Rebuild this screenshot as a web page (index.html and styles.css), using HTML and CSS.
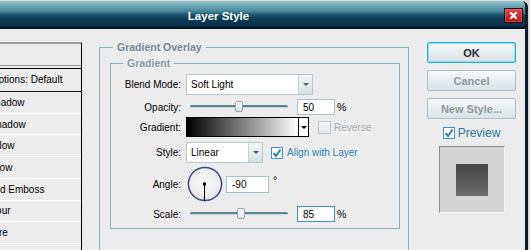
FILE: index.html
```html
<!DOCTYPE html>
<html>
<head>
<meta charset="utf-8">
<title>Layer Style</title>
<link rel="stylesheet" href="styles.css">
</head>
<body>
<div class="window">
  <div class="titlebar">
    <div class="title">Layer Style</div>
    <button class="close" aria-label="Close">
      <svg width="7" height="7" viewBox="0 0 7 7"><path d="M1 1L6 6M6 1L1 6" stroke="#fff" stroke-width="2.2" stroke-linecap="square"/></svg>
    </button>
  </div>
  <div class="content">
    <div class="styles-list">
      <div class="list-head">Styles</div>
      <div class="list-item blending">Blending Options: Default</div>
      <div class="list-item">Drop Shadow</div>
      <div class="list-item">Inner Shadow</div>
      <div class="list-item">Outer Glow</div>
      <div class="list-item">Inner Glow</div>
      <div class="list-item bevel">Bevel and Emboss</div>
      <div class="list-item sub">Contour</div>
      <div class="list-item sub">Texture</div>
      <div class="list-item">Satin</div>
    </div>

    <div class="panel">
      <div class="group outer">
        <div class="group-title">Gradient Overlay</div>
        <div class="group inner">
          <div class="group-title light">Gradient</div>

          <div class="row r-blend">
            <span class="lbl">Blend Mode:</span>
            <div class="select blend"><span class="sel-text">Soft Light</span><span class="sel-btn"></span></div>
          </div>

          <div class="row r-opacity">
            <span class="lbl">Opacity:</span>
            <div class="slider"><div class="track"></div><div class="thumb" style="left: calc(50% - 4px)"></div></div>
            <input class="num" type="text" value="50">
            <span class="unit">%</span>
          </div>

          <div class="row r-gradient">
            <span class="lbl">Gradient:</span>
            <div class="gradient"><span class="gradient-bar"></span><span class="gradient-btn"></span></div>
            <span class="check disabled"></span>
            <span class="check-label disabled">Reverse</span>
          </div>

          <div class="row r-style">
            <span class="lbl">Style:</span>
            <div class="select style"><span class="sel-text">Linear</span><span class="sel-btn"></span></div>
            <span class="check checked small">
              <svg width="10" height="10" viewBox="0 0 10 10"><path d="M1.5 5L4 8L8.5 1.5" fill="none" stroke="#2a86bb" stroke-width="2"/></svg>
            </span>
            <span class="check-label blue">Align with Layer</span>
          </div>

          <div class="row r-angle">
            <span class="lbl">Angle:</span>
            <svg class="dial" width="36" height="36" viewBox="0 0 36 36">
              <defs>
                <radialGradient id="dg" cx="50%" cy="45%" r="55%">
                  <stop offset="0" stop-color="#f7f7f7"/>
                  <stop offset="0.8" stop-color="#ececee"/>
                  <stop offset="1" stop-color="#d8dae4"/>
                </radialGradient>
              </defs>
              <circle cx="18" cy="18" r="16.6" fill="url(#dg)" stroke="#3f4a7c" stroke-width="1.5"/>
              <line x1="17.5" y1="18" x2="17.5" y2="35" stroke="#000" stroke-width="1"/>
              <rect x="16" y="16.5" width="3" height="3" fill="#000"/>
            </svg>
            <input class="num angle" type="text" value="-90">
            <span class="unit deg">°</span>
          </div>

          <div class="row r-scale">
            <span class="lbl">Scale:</span>
            <div class="slider"><div class="track"></div><div class="thumb" style="left: calc(52% - 4px)"></div></div>
            <input class="num focus" type="text" value="85">
            <span class="unit">%</span>
          </div>
        </div>
      </div>
    </div>

    <div class="buttons">
      <button class="btn ok">OK</button>
      <button class="btn">Cancel</button>
      <button class="btn">New Style...</button>
      <div class="preview-row">
        <span class="check checked">
          <svg width="10" height="10" viewBox="0 0 10 10"><path d="M1.5 5L4 8L8.5 1.5" fill="none" stroke="#2a86bb" stroke-width="2"/></svg>
        </span>
        <span class="preview-label">Preview</span>
      </div>
      <div class="preview-box"><div class="preview-swatch"></div></div>
    </div>
  </div>
</div>
</body>
</html>
```
FILE: styles.css
```css
* { box-sizing: border-box; }
html, body { margin: 0; padding: 0; }
body {
  width: 530px;
  height: 250px;
  overflow: hidden;
  background: #dadada;
  font-family: "Liberation Sans", Arial, sans-serif;
  font-size: 10px;
  color: #000;
}

.window {
  margin: 1px 0 0 -88px;
  width: 616px;
  height: 260px;
  background: #ececec;
  border-right: 3px solid #0c1c2a;
  border-top-right-radius: 6px;
  overflow: hidden;
}

.titlebar {
  height: 28px;
  display: grid;
  grid-template-columns: 1fr auto 1fr;
  align-items: start;
  background: linear-gradient(to bottom, #94cad2 0%, #6eaab8 18%, #478596 40%, #1c5870 52%, #0d3f58 66%, #082d45 100%);
  border-bottom: 2px solid #02121f;
}
.title {
  grid-column: 2;
  color: #fff;
  font-weight: bold;
  font-size: 11.5px;
  line-height: 14px;
  padding-top: 8px;
}
.close {
  grid-column: 3;
  justify-self: end;
  margin: 7px 2px 0 0;
  width: 19px;
  height: 15px;
  padding: 0;
  border: 1px solid #2a0810;
  background: linear-gradient(to bottom, #e2474c, #b6141c);
  box-shadow: inset 0 0 0 1px rgba(255, 140, 140, 0.35);
  display: flex;
  align-items: center;
  justify-content: center;
}

.content {
  display: flex;
  height: 221px;
}

/* styles list */
.styles-list {
  flex: none;
  margin: 13px 0 0 8px;
  width: 162px;
  border-top: 2px solid #9c9c9c;
  border-left: 1px solid #000;
  border-right: 1px solid #000;
}
.list-head {
  height: 22px;
  border-bottom: 1px solid #9a9a9a;
  padding-left: 29px;
  display: flex;
  align-items: center;
}
.list-item {
  height: 21.72px;
  border-bottom: 1px solid #fff;
  padding-left: 43px;
  display: flex;
  align-items: center;
  white-space: nowrap;
}
.list-item.blending {
  margin-top: 2px;
  height: 24px;
  border-top: 1px solid #000;
  border-bottom: 1px solid #1a1a1a;
  padding-left: 28px;
  padding-bottom: 2px;
}
.list-item.bevel { padding-left: 40px; }
.list-item.sub { padding-left: 54px; }

/* panel */
.panel {
  flex: none;
  margin: 18px 0 0 17px;
  width: 310px;
}
.group {
  border: 1px solid #84b5b9;
}
.group.outer { height: 240px; }
.group.inner {
  margin: 9px 8px 0 10px;
  padding-bottom: 6px;
}
.group-title {
  width: fit-content;
  margin: -7px 0 0 13px;
  padding: 0 4px;
  background: #ececec;
  line-height: 13px;
  font-size: 10.5px;
  font-weight: bold;
  color: #778a93;
}
.group-title.light {
  margin-left: 12px;
  color: #8a9ca4;
}

.row {
  display: flex;
  align-items: center;
}
.lbl {
  flex: none;
  width: 70px;
  margin-right: 5px;
  text-align: right;
}
.r-blend { margin-top: 4px; height: 21px; }
.r-opacity { margin-top: 4px; height: 16px; }
.r-gradient { margin-top: 2px; height: 20px; }
.r-style { margin-top: 5px; height: 21px; }
.r-angle { margin-top: 3px; height: 36px; }
.r-scale { margin-top: 4px; height: 16px; }

.select {
  flex: none;
  display: flex;
  height: 21px;
  border: 1px solid #b8c7ce;
  background: #fff;
}
.select.blend { width: 127px; }
.select.style { width: 77px; }
.sel-text {
  flex: 1;
  padding-left: 4px;
  display: flex;
  align-items: center;
}
.sel-btn {
  flex: none;
  width: 14px;
  border-left: 1px solid #c6d2d7;
  background: linear-gradient(to bottom, #f4f7f8, #d5dfe2);
  display: flex;
  align-items: center;
  justify-content: center;
}
.sel-btn::after {
  content: "";
  border-left: 3px solid transparent;
  border-right: 3px solid transparent;
  border-top: 3px solid #4d5d66;
}

.slider {
  flex: none;
  position: relative;
  width: 106px;
  height: 16px;
}
.track {
  margin: 6px 4px 0;
  height: 3px;
  border-radius: 2px;
  background: linear-gradient(to bottom, #5a8592 0, #5a8592 2px, #c9d7db 2px);
}
.thumb {
  position: absolute;
  top: 2px;
  width: 8px;
  height: 11px;
  border: 1px solid #8fa6ae;
  border-radius: 2px;
  background: linear-gradient(to bottom, #ffffff, #dce4e7);
}
.num {
  flex: none;
  margin: 0 0 0 5px;
  width: 38px;
  height: 16px;
  padding: 0 0 0 5px;
  border: 1px solid #a8c0ca;
  background: #fff;
  font-family: inherit;
  font-size: 10px;
  color: #000;
  outline: none;
}
.num.focus { border-color: #3596b0; }
.num.angle {
  margin-left: 3px;
  width: 43px;
  height: 17px;
}
.unit { margin-left: 2px; font-size: 10.5px; }
.unit.deg { margin-left: 4px; align-self: flex-start; margin-top: 8px; }

.gradient {
  flex: none;
  display: flex;
  width: 123px;
  height: 20px;
  border: 1px solid #000;
}
.gradient-bar {
  flex: 1;
  background: linear-gradient(to right, #000, #fff);
}
.gradient-btn {
  flex: none;
  width: 10px;
  border-left: 1px solid #000;
  background: #fff;
  display: flex;
  align-items: center;
  justify-content: center;
}
.gradient-btn::after {
  content: "";
  border-left: 3px solid transparent;
  border-right: 3px solid transparent;
  border-top: 3px solid #000;
}

.check {
  flex: none;
  width: 13px;
  height: 13px;
  border: 1px solid #3d93c2;
  background: #fff;
  display: flex;
  align-items: center;
  justify-content: center;
}
.check.small { width: 12px; height: 12px; }
.check.disabled {
  margin-left: 9px;
  border-color: #bac7cc;
  background: linear-gradient(to bottom, #f6f8f9, #e1e7ea);
}
.r-style .check { margin-left: 8px; }
.check-label { margin-left: 3px; }
.check-label.disabled { color: #a2adb2; }
.check-label.blue { margin-left: 4px; color: #2a86ab; }

.dial { flex: none; margin-left: 1px; }

/* buttons */
.buttons {
  flex: none;
  margin: 13px 0 0 18px;
  width: 89px;
  display: flex;
  flex-direction: column;
  align-items: center;
}
.btn {
  width: 89px;
  height: 21px;
  margin: 0 0 7px;
  padding: 0;
  border: 1px solid #aac0c7;
  border-radius: 2px;
  background: linear-gradient(to bottom, #f6f9f9, #d8e2e5);
  font-family: "Liberation Sans", Arial, sans-serif;
  font-size: 11px;
  font-weight: bold;
  color: #8c9aa1;
}
.btn.ok {
  border: 1px solid #1fb2e0;
  box-shadow: inset 0 0 0 1px #8fdcf3;
  color: #1d2b35;
}
.preview-row {
  margin-top: 1px;
  height: 12px;
  display: flex;
  align-items: center;
}
.preview-row .check { width: 12px; height: 12px; }
.preview-label {
  margin-left: 3px;
  font-size: 12px;
  color: #2a78a8;
}
.preview-box {
  margin-top: 7px;
  width: 66px;
  height: 67px;
  border-top: 1px solid #8a8a8a;
  border-left: 1px solid #8a8a8a;
  border-right: 1px solid #f4f4f4;
  border-bottom: 1px solid #f4f4f4;
  background: #d5d5d5;
  display: flex;
  align-items: center;
  justify-content: center;
}
.preview-swatch {
  width: 32px;
  height: 32px;
  background: linear-gradient(to bottom, #464646, #6c6c6c);
}
```
